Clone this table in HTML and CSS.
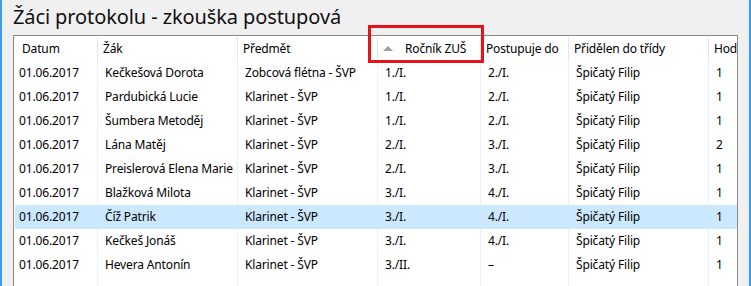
FILE: index.html
```html
<!DOCTYPE html>
<html lang="cs">
<head>
    <meta charset="UTF-8">
    <title>Žáci protokolu - zkouška postupová</title>
    <link rel="stylesheet" href="styles.css">
</head>
<body>
    <div class="window">
        <!-- Title -->
        <h1 class="page-title">Žáci protokolu - zkouška postupová</h1>

        <!-- Student list -->
        <div class="grid">
            <div class="row head">
                <div class="cell">Datum</div>
                <div class="cell">Žák</div>
                <div class="cell">Předmět</div>
                <div class="cell sorted"><span class="sort-arrow"></span>Ročník ZUŠ</div>
                <div class="cell">Postupuje do</div>
                <div class="cell">Přidělen do třídy</div>
                <div class="cell">Hod</div>
            </div>
            <div class="row">
                <div class="cell">01.06.2017</div><div class="cell">Kečkešová Dorota</div><div class="cell">Zobcová flétna - ŠVP</div>
                <div class="cell">1./I.</div><div class="cell">2./I.</div><div class="cell">Špičatý Filip</div><div class="cell">1</div>
            </div>
            <div class="row">
                <div class="cell">01.06.2017</div><div class="cell">Pardubická Lucie</div><div class="cell">Klarinet - ŠVP</div>
                <div class="cell">1./I.</div><div class="cell">2./I.</div><div class="cell">Špičatý Filip</div><div class="cell">1</div>
            </div>
            <div class="row">
                <div class="cell">01.06.2017</div><div class="cell">Šumbera Metoděj</div><div class="cell">Klarinet - ŠVP</div>
                <div class="cell">1./I.</div><div class="cell">2./I.</div><div class="cell">Špičatý Filip</div><div class="cell">1</div>
            </div>
            <div class="row">
                <div class="cell">01.06.2017</div><div class="cell">Lána Matěj</div><div class="cell">Klarinet - ŠVP</div>
                <div class="cell">2./I.</div><div class="cell">3./I.</div><div class="cell">Špičatý Filip</div><div class="cell">2</div>
            </div>
            <div class="row">
                <div class="cell">01.06.2017</div><div class="cell">Preislerová Elena Marie</div><div class="cell">Klarinet - ŠVP</div>
                <div class="cell">2./I.</div><div class="cell">3./I.</div><div class="cell">Špičatý Filip</div><div class="cell">1</div>
            </div>
            <div class="row">
                <div class="cell">01.06.2017</div><div class="cell">Blažková Milota</div><div class="cell">Klarinet - ŠVP</div>
                <div class="cell">3./I.</div><div class="cell">4./I.</div><div class="cell">Špičatý Filip</div><div class="cell">1</div>
            </div>
            <div class="row selected">
                <div class="cell">01.06.2017</div><div class="cell">Číž Patrik</div><div class="cell">Klarinet - ŠVP</div>
                <div class="cell">3./I.</div><div class="cell">4./I.</div><div class="cell">Špičatý Filip</div><div class="cell">1</div>
            </div>
            <div class="row">
                <div class="cell">01.06.2017</div><div class="cell">Kečkeš Jonáš</div><div class="cell">Klarinet - ŠVP</div>
                <div class="cell">3./I.</div><div class="cell">4./I.</div><div class="cell">Špičatý Filip</div><div class="cell">1</div>
            </div>
            <div class="row">
                <div class="cell">01.06.2017</div><div class="cell">Hevera Antonín</div><div class="cell">Klarinet - ŠVP</div>
                <div class="cell">3./II.</div><div class="cell">–</div><div class="cell">Špičatý Filip</div><div class="cell">1</div>
            </div>
            <!-- empty space under the last row keeps the column lines -->
            <div class="row filler">
                <div class="cell"></div><div class="cell"></div><div class="cell"></div>
                <div class="cell"></div><div class="cell"></div><div class="cell"></div><div class="cell"></div>
            </div>
        </div>

        <!-- Highlight around the sorted column header -->
        <div class="sort-mark"></div>
    </div>
</body>
</html>
```

FILE: styles.css
```css
/* Reset */
html, body {
    margin: 0;
    padding: 0;
}

body {
    background: #f0f0f0;
    font-family: "Noto Sans", "Open Sans", sans-serif;
    color: #000;
    overflow: hidden;
}

/* Window frame */
.window {
    position: relative;
    box-sizing: border-box;
    height: 286px;
    padding: 0 11px;
    border-left: 2px solid #3c9be6;
    border-right: 2px solid #3c9be6;
    overflow: hidden;
}

.page-title {
    margin: 0;
    height: 35px;
    padding-top: 3px;
    box-sizing: border-box;
    font-size: 20px;
    font-weight: normal;
    line-height: 28px;
    letter-spacing: -0.1px;
    color: #111;
}

/* List */
.grid {
    height: 270px;
    border: 1px solid #8a8a8a;
    background: #fff;
    overflow: hidden;
    font-size: 12px;
    letter-spacing: -0.15px;
}

.row {
    display: grid;
    grid-template-columns: 84px 140px 140px 103px 88px 140px 1fr;
    height: 24px;
}

.cell {
    box-sizing: border-box;
    padding-left: 7px;
    line-height: 24px;
    white-space: nowrap;
    overflow: hidden;
    border-right: 1px solid #e9f1fa;
}

.row .cell:first-child {
    padding-left: 5px;
}

.row .cell:last-child {
    border-right: none;
}

/* Header */
.row.head {
    height: 25px;
}

.head .cell {
    padding-left: 5px;
    line-height: 23px;
    margin-top: 1px;
    border-right-color: #e5e5e5;
}

.head .cell:first-child {
    padding-left: 8px;
}

.sort-arrow {
    display: inline-block;
    width: 0;
    height: 0;
    margin-right: 12px;
    vertical-align: 2px;
    border-left: 5px solid transparent;
    border-right: 5px solid transparent;
    border-bottom: 5px solid #a0a0a0;
}

/* Selected row */
.row.selected {
    background: #cce8ff;
    box-shadow: inset 1px 0 #fff;
}

.row.selected .cell {
    border-right-color: #cce8ff;
}

.row.filler {
    height: 40px;
}

/* Red frame around the sorted header */
.sort-mark {
    position: absolute;
    left: 366px;
    top: 25px;
    width: 110px;
    height: 32px;
    border: 3px solid #e4141b;
}
```
